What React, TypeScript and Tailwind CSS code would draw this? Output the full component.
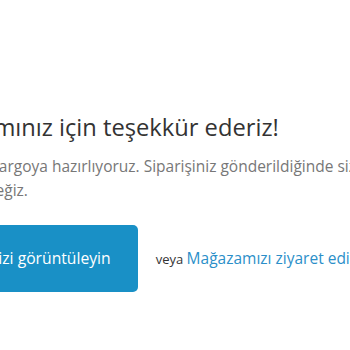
export default function App() {
  return (
    <div className="h-[350px] w-[350px] overflow-hidden bg-white font-['Open_Sans',sans-serif]">
      <div className="ml-[-86px] w-[700px] pt-[111px]">
        <h2 className="-ml-[7px] text-[23.7px] leading-[32px] text-[#333333]">
          Satın alımınız için teşekkür ederiz!
        </h2>
        <p className="mt-[11px] -ml-[4px] text-[15.5px] leading-[24px] text-[#777777]">
          Siparişinizi kargoya hazırlıyoruz. Siparişiniz gönderildiğinde size
          <br />
          haber vereceğiz.
        </p>
        <div className="mt-[23px] flex items-center">
          <button className="h-[67px] rounded-[5px] bg-[#1990c6] pl-[22px] pr-[27px] text-[15.7px] text-white">
            Siparişinizi görüntüleyin
          </button>
          <span className="ml-[18px] text-[13px] text-[#333333]">
            veya{' '}
            <a href="#" className="text-[15.5px] text-[#2b8fc9]">
              Mağazamızı ziyaret edin
            </a>
          </span>
        </div>
      </div>
    </div>
  );
}
